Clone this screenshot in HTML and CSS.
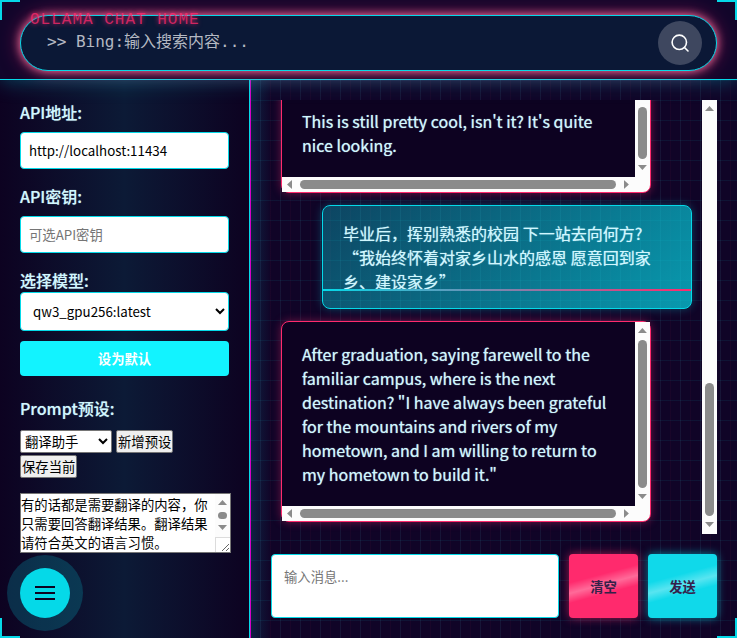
FILE: index.html
```html
<!DOCTYPE html>
<html lang="zh-CN">
<head>
<meta charset="utf-8">
<title>Ollama Chat Home</title>
<link rel="stylesheet" href="styles.css">
</head>
<body>
<header class="topbar">
  <h1 class="brand">OLLAMA CHAT HOME</h1>
  <form class="search">
    <input class="search-input" type="text" aria-label="搜索" placeholder="&gt;&gt; Bing:输入搜索内容...">
    <button class="search-button" type="button" aria-label="搜索">
      <svg width="20" height="20" viewBox="0 0 20 20" fill="none" stroke="#fff" stroke-width="1.6" stroke-linecap="round"><circle cx="9.3" cy="9.3" r="7.2"/><path d="M14.5 14.5L18 18"/></svg>
    </button>
  </form>
</header>
<div class="layout">
  <aside class="sidebar">
    <div class="field">
      <label for="api-url">API地址:</label>
      <input class="text-input" id="api-url" type="text" value="http://localhost:11434">
    </div>
    <div class="field">
      <label for="api-key">API密钥:</label>
      <input class="text-input" id="api-key" type="text" placeholder="可选API密钥">
    </div>
    <div class="field model">
      <label for="model">选择模型:</label>
      <select class="model-select" id="model"><option>qw3_gpu256:latest</option></select>
      <button class="default-button" type="button">设为默认</button>
    </div>
    <div class="field presets">
      <label for="preset">Prompt预设:</label>
      <div class="preset-row">
        <select class="preset-select" id="preset"><option>翻译助手</option></select>
        <button class="plain-button" type="button">新增预设</button>
        <button class="plain-button" type="button">保存当前</button>
      </div>
      <div class="prompt-box">
        <textarea class="prompt" aria-label="Prompt">有的话都是需要翻译的内容，你只需要回答翻译结果。翻译结果请符合英文的语言习惯。
</textarea>
        <div class="vbar" aria-hidden="true"><span class="track"><span class="thumb"></span></span></div>
        <span class="grip"></span>
      </div>
    </div>
  </aside>
  <main class="main">
    <div class="chat">
      <div class="messages">
        <div class="message reply">
          <div class="reply-text">This is still pretty cool, isn't it? It's quite nice looking.</div>
          <div class="vbar" aria-hidden="true"><span class="track"><span class="thumb"></span></span></div>
          <div class="hbar" aria-hidden="true"><span class="track"><span class="thumb"></span></span></div>
        </div>
        <div class="message user">毕业后，挥别熟悉的校园 下一站去向何方?<br>“我始终怀着对家乡山水的感恩 愿意回到家乡、建设家乡”</div>
        <div class="message reply">
          <div class="reply-text">After graduation, saying farewell to the familiar campus, where is the next destination? "I have always been grateful for the mountains and rivers of my hometown, and I am willing to return to my hometown to build it."</div>
          <div class="vbar" aria-hidden="true"><span class="track"><span class="thumb"></span></span></div>
          <div class="hbar" aria-hidden="true"><span class="track"><span class="thumb"></span></span></div>
        </div>
      </div>
      <div class="vbar" aria-hidden="true"><span class="track at-end"><span class="thumb third"></span></span></div>
    </div>
    <form class="composer">
      <textarea class="message-input" aria-label="消息" placeholder="输入消息..."></textarea>
      <button class="action clear" type="button">清空</button>
      <button class="action send" type="button">发送</button>
    </form>
  </main>
</div>
<button class="menu-button" type="button" aria-label="菜单">
  <svg width="20" height="14" viewBox="0 0 20 14" stroke="#0d0221" stroke-width="2"><path d="M0 1H20M0 7H20M0 13H20"/></svg>
</button>
<i class="corner tl"></i><i class="corner tr"></i><i class="corner bl"></i><i class="corner br"></i>
</body>
</html>
```
FILE: styles.css
```css
* { box-sizing: border-box; }
body {
  --cyan: #05d9e8;
  --pink: #ff2a6d;
  --text: #d1f7ff;
  --bar: #fcfcfc;
  --thumb: #8b8b8b;
  margin: 0;
  height: 100vh;
  display: flex;
  flex-direction: column;
  overflow: hidden;
  background: #0d0221;
  color: var(--text);
  font: 400 16px/24px "Noto Sans CJK SC", sans-serif;
}
button, input, select, textarea { font-family: inherit; }

/* Scrollbars */
.vbar, .hbar {
  display: flex;
  justify-content: space-between;
  align-items: center;
  background: var(--bar);
}
.vbar { flex-direction: column; width: 15px; padding: 6px 0 7px; }
.hbar { height: 15px; padding: 0 6px 0 5px; }
.vbar::before, .vbar::after, .hbar::before, .hbar::after {
  content: "";
  flex: none;
  background: var(--thumb);
}
.vbar::before, .vbar::after { width: 9px; height: 5px; }
.hbar::before, .hbar::after { width: 5px; height: 9px; }
.vbar::before { clip-path: polygon(50% 0, 100% 100%, 0 100%); }
.vbar::after { clip-path: polygon(0 0, 100% 0, 50% 100%); }
.hbar::before { clip-path: polygon(0 50%, 100% 0, 100% 100%); }
.hbar::after { clip-path: polygon(0 0, 100% 50%, 0 100%); }
.track { display: flex; flex: 1; }
.vbar .track { flex-direction: column; width: 9px; margin: 7px 0 6px; }
.hbar .track { height: 9px; margin: 0 8px; }
.track.at-end { justify-content: flex-end; }
.thumb { flex: 1; border-radius: 5px; background: var(--thumb); }
.thumb.third { flex: 0 0 33.3%; }

.topbar {
  position: relative;
  z-index: 1;
  padding: 15px 20px 8px;
  background: #12062b;
  border-bottom: 1px solid var(--cyan);
  box-shadow: 0 0 20px rgba(5, 217, 232, .35);
}
.brand {
  position: absolute;
  z-index: 1;
  top: 10px;
  left: 30px;
  margin: 0;
  color: var(--pink);
  font: 400 16px/20px "Liberation Mono", monospace;
  letter-spacing: 1px;
  opacity: .8;
  text-shadow: 0 0 5px var(--pink);
}
.search {
  display: flex;
  align-items: center;
  height: 56px;
  padding: 0 14px 0 26px;
  border: 1px solid var(--cyan);
  border-radius: 28px;
  background: #0b1836;
  box-shadow: 0 0 10px #ff7ba5, 0 0 20px rgba(255, 42, 109, .5);
}
.search-input {
  flex: 1;
  min-width: 0;
  padding: 0 0 2px;
  border: 0;
  outline: 0;
  background: none;
  color: #fff;
  font: 400 16px/24px "DejaVu Sans Mono", "Noto Sans CJK SC", monospace;
}
.search-input::placeholder { color: #b4b8c2; }
.search-button {
  display: grid;
  place-items: center;
  width: 44px;
  height: 44px;
  padding: 0;
  border: 0;
  border-radius: 50%;
  background: #3e475f;
}
.layout { flex: 1; min-height: 0; display: flex; }
.sidebar {
  width: 250px;
  flex: none;
  padding: 20px;
  border-right: 1px solid var(--cyan);
  background: linear-gradient(90deg, #0d0221, #0c1a36 50%, #0d0221);
}
.field { margin-bottom: 15px; }
.field label {
  display: block;
  margin-bottom: 8px;
  line-height: 24px;
  font-weight: 500;
  text-shadow: 0 0 1px rgba(209, 247, 255, .6);
}
.text-input {
  display: block;
  width: 100%;
  height: 37px;
  padding: 0 8px;
  border: 1px solid var(--cyan);
  border-radius: 4px;
}
.text-input::placeholder, .message-input::placeholder { color: #757575; }
.field.model { margin-bottom: 20px; }
.field.model label { margin: 0; }
.model-select {
  display: block;
  width: 100%;
  height: 39px;
  padding: 0 8px;
  border: 1px solid var(--cyan);
  border-radius: 4px;
  background: #fff;
  color: #000;
}
.default-button {
  width: 100%;
  height: 35px;
  margin-top: 10px;
  border: 0;
  border-radius: 4px;
  display: block;
  background: #12f3ff;
  color: #fff;
  font-weight: 700;
}
.field.presets label { margin-bottom: 10px; }
.preset-row { display: flex; flex-wrap: wrap; gap: 2px 4px; margin-bottom: 15px; }
.preset-select, .plain-button {
  height: 23px;
  border: 1px solid #767676;
  border-radius: 2px;
}
.preset-select { width: 92px; padding: 0; background: #fff; color: #000; }
.plain-button { padding: 0 1px; background: #efefef; color: #000; }
.prompt-box { position: relative; width: 211px; }
.prompt {
  display: block;
  width: 100%;
  height: 60px;
  padding: 1px 16px 1px 0;
  border: 1px solid #767676;
  line-height: 19px;
}
.prompt-box .vbar { position: absolute; top: 1px; right: 1px; height: 43px; }
.grip {
  position: absolute;
  right: 1px;
  bottom: 1px;
  width: 15px;
  height: 15px;
  border: 1px solid #dcdcdc;
  border-width: 1px 0 0 1px;
  pointer-events: none;
}
.main {
  flex: 1;
  min-width: 0;
  display: flex;
  flex-direction: column;
  gap: 20px;
  padding: 20px;
  border-left: 1px solid #d300c5;
  background:
    linear-gradient(90deg, rgba(5, 217, 232, .07) 1px, transparent 1px) 9px 0 / 20px 20px,
    linear-gradient(rgba(5, 217, 232, .07) 1px, transparent 1px) 0 0 / 20px 20px,
    linear-gradient(90deg, rgba(255, 42, 109, .04) 1px, transparent 1px) 9px 0 / 10px 10px,
    linear-gradient(90deg, rgba(5, 217, 232, .14), transparent 20px),
    #100427;
}
.chat { flex: 1; min-height: 0; display: flex; }
.messages {
  flex: 1;
  min-width: 0;
  display: flex;
  flex-direction: column;
  justify-content: flex-end;
  gap: 12px;
  overflow: hidden;
  padding: 0 10px 12px;
}
.message {
  flex: none;
  width: 90%;
  border-radius: 8px;
  text-shadow: 0 0 1px rgba(209, 247, 255, .8);
}
.reply {
  display: grid;
  grid-template-columns: 1fr 15px;
  grid-template-rows: auto 15px;
  border: 1px solid var(--pink);
  background: linear-gradient(var(--bar), var(--bar)) right bottom / 15px 15px no-repeat, #0d0221;
  box-shadow: 0 0 10px rgba(255, 42, 109, .4);
}
.reply-text { padding: 20px; }
.user {
  position: relative;
  align-self: flex-end;
  padding: 15px 20px;
  border: 1px solid var(--cyan);
  background: linear-gradient(135deg, rgba(5, 217, 232, .3), rgba(5, 217, 232, .7));
  box-shadow: 0 0 10px rgba(5, 217, 232, .3);
}
.user::after {
  content: "";
  position: absolute;
  left: 0;
  right: 0;
  bottom: 17px;
  height: 2px;
  background: linear-gradient(90deg, var(--cyan), var(--pink));
}
.composer { display: flex; gap: 10px; height: 64px; }
.message-input {
  flex: 1;
  min-width: 0;
  padding: 12px;
  border: 1px solid var(--cyan);
  border-radius: 4px;
  resize: none;
  line-height: 20px;
}
.action {
  width: 69px;
  padding: 0;
  border: 0;
  border-radius: 4px;
  color: #352049;
  font-weight: 700;
}
.clear {
  background: linear-gradient(165deg, transparent 35%, rgba(255, 255, 255, .3) 48%, transparent 60%), var(--pink);
  box-shadow: 0 0 10px rgba(255, 42, 109, .6);
}
.send {
  background: linear-gradient(165deg, transparent 35%, rgba(255, 255, 255, .3) 48%, transparent 60%), #10d9ea;
  box-shadow: 0 0 10px rgba(5, 217, 232, .6);
}
.menu-button {
  position: fixed;
  z-index: 2;
  left: 20px;
  bottom: 20px;
  display: grid;
  place-items: center;
  width: 50px;
  height: 50px;
  padding: 0;
  border: 0;
  border-radius: 50%;
  background: var(--cyan);
  box-shadow: 0 0 0 13px rgba(5, 217, 232, .2);
}
.corner { position: fixed; z-index: 3; width: 20px; height: 20px; border: 0 solid var(--cyan); pointer-events: none; }
.tl { top: 0; left: 0; border-width: 2px 0 0 2px; }
.tr { top: 0; right: 0; border-width: 2px 2px 0 0; }
.bl { bottom: 0; left: 0; border-width: 0 0 2px 2px; }
.br { bottom: 0; right: 0; border-width: 0 2px 2px 0; }
```
